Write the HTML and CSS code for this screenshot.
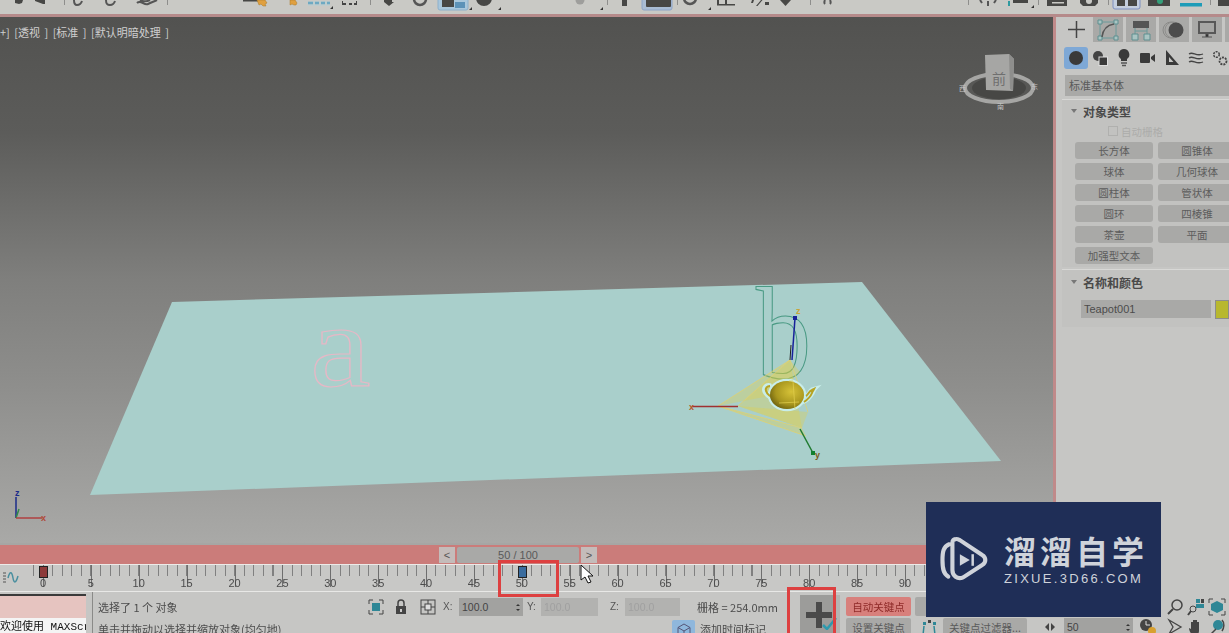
FILE: index.html
```html
<!DOCTYPE html>
<html lang="zh">
<head>
<meta charset="utf-8">
<title>3ds Max</title>
<link rel="stylesheet" href="styles.css">
</head>
<body>
<div class="app">
  <header class="toolbar">
    <svg class="toolbar-icons" width="1229" height="14" viewBox="0 0 1229 14">
      <g fill="#8e8e8c">
        <rect x="64" y="0" width="1" height="5"/>
        <rect x="167" y="0" width="1" height="5"/>
        <rect x="370" y="0" width="1" height="5"/>
        <rect x="607" y="0" width="1" height="5"/>
        <rect x="677" y="0" width="1" height="5"/>
        <rect x="810" y="0" width="1" height="5"/>
        <rect x="968" y="0" width="1" height="5"/>
        <rect x="1038" y="0" width="1" height="5"/>
        <rect x="1108" y="0" width="1" height="5"/>
        <rect x="1210" y="0" width="1" height="5"/>
      </g>
      <!-- highlighted tools -->
      <rect x="438" y="-3" width="30" height="13" rx="2" fill="#a9c7dc" stroke="#8cb0cc"/>
      <rect x="642" y="-3" width="30" height="13" rx="2" fill="#a9bcd4" stroke="#8ca4c8"/>
      <rect x="1113" y="-3" width="27" height="12" rx="2" fill="#c4cede" stroke="#7d8fc0"/>
      <g fill="#474745">
        <path d="M15 0h8l-1 3-3 1-4-1zM35 0h10v4l-2 0-8-3z"/>
        <rect x="243" y="0" width="15" height="1.500"/>
        <path d="M384 0h8v2h2l-5 4-5-4h0z"/>
        <path d="M442 0h12v7h-12z"/>
        <circle cx="484" cy="-2" r="8"/>
        <path d="M622 0h5v6h-5z"/>
        <rect x="646" y="-2" width="25" height="9" rx="1"/>
        <path d="M717 0h2v4h16v1.500h-18zM725 0h2v4h-2z"/>
        <path d="M752 0h2l-1 3h-2zM761 0l-5 6h1.500l5-6zM765 2h4v3h-4z"/>
        <path d="M780 0h11l-5.500 6z"/>
        <path d="M1013 0h15v3h-15z"/>
        <path d="M1047 0h20v6h-20z"/>
        <path d="M1080 0h18v3l-3 3h-12l-3-3z"/>
        <path d="M1117 0h8v6h-8zM1128 0h9v6h-9z"/>
        <path d="M1148 0h22v6h-22z"/>
        <path d="M1218 0h11v6h-11z"/>
      </g>
      <rect x="1052" y="2" width="12" height="1.500" fill="#c9c9c5"/>
      <circle cx="1089" cy="1" r="3" fill="#c9c9c5"/>
      <g fill="none" stroke="#555" stroke-width="2">
        <path d="M74 0c0 4 1 5 3 5s4-1 5-4M106 0c0 4 1 5 4 5s4-1 5-4"/>
        <path d="M137 3c4-4 7 3 11 1s5-2 9-4M140 0c4 2 8 1 10 0"/>
        <circle cx="420" cy="-1" r="6" stroke-width="2.500"/>
        <circle cx="690" cy="-2" r="6" stroke-width="2.500"/>
        <path d="M825 0c-1 2-1 3 0 4M830 0c1 2 1 3 0 4"/>
        <path d="M980 0l2 3M996 0l-2 3"/>
      </g>
      <rect x="987" y="1" width="2" height="5" fill="#555"/>
      <rect x="1008" y="1" width="2" height="5" fill="#2f9aa0"/>
      <circle cx="1160" cy="1" r="3" fill="#35a07a"/>
      <g fill="#e0a040" stroke="#a87a28" stroke-width=".5">
        <path d="M257 0h8l2 3-2 1 1 2-3 0-2-2-2 1z"/>
        <path d="M290 0h5l2 3-1 2-2 0-2-1-2 1z"/>
      </g>
      <path d="M308 3h5M315 3h4M321 3h4M327 3h3" stroke="#4d94b4" stroke-width="2.500"/>
      <path d="M308 1h22v5h-22z" fill="#a8d2de" opacity=".35"/>
      <path d="M342 4h4M349 4h3M354 4h3M342 2h1M356 2h1" stroke="#444" stroke-width="2"/>
      <rect x="455" y="2" width="10" height="6" fill="#5c92b8"/>
      <circle cx="580" cy="0" r="4.500" fill="#9e9e9c"/>
      <rect x="1180" y="3" width="22" height="3.500" fill="#1d9cb8"/>
      <g fill="#333">
        <path d="M333 6v3h-3zM472 7v3h-3zM501 7v3h-3zM603 7v3h-3zM711 7v3h-3zM1034 5v3h-3z"/>
      </g>
    </svg>
  </header>

  <div class="work">
    <div class="stage">
      <main class="viewport">
        <div class="vp-label">+] [透视 ] [标准 ] [默认明暗处理 ]</div>
        <svg class="scene" width="1053" height="526" viewBox="0 17 1053 526">
          <polygon points="172,302 862,282 1001,461 90,495" fill="#a9cfcb"/>
          <text class="glyph-a" transform="translate(310 386) scale(1.12 .98)">a</text>
          <text class="glyph-b" transform="translate(756 378) scale(.84 1)">b</text>
          <!-- view cube -->
          <ellipse cx="999" cy="88" rx="34" ry="14" fill="none" stroke="#a6a6a4" stroke-width="4"/>
          <ellipse cx="999" cy="88" rx="27" ry="11" fill="#474745"/>
          <path d="M985 55l24-1 5 5-1 32-27-1z" fill="#a6a6a4"/>
          <path d="M1009 54l5 5-1 32-3-2z" fill="#8e8e8c"/>
          <text class="cube-t" x="992" y="84">前</text>
          <text class="cube-d" x="959" y="91">西</text>
          <text class="cube-d" x="1031" y="89">东</text>
          <text class="cube-d" x="997" y="109">南</text>
          <!-- light cone -->
          <g fill="#e8cf3a" fill-opacity=".3">
            <polygon points="718,406 790,360 800,372 775,395"/>
            <polygon points="738,406 790,360 802,428"/>
            <polygon points="718,406 802,428 806,436"/>
            <polygon points="738,406 808,412 802,428"/>
          </g>
          <g stroke="#e2d26e" stroke-width="1" fill="none" opacity=".75">
            <path d="M718 406L790 360M718 406L802 428M718 406L806 436M738 406L790 360M790 360L808 412"/>
          </g>
          <!-- teapot -->
          <path d="M770 385c-4-1-7 2-6 6 1 4 6 7 11 9M806 396c2-1 3-5 6-7l4-1c-2 2-2 3-3 5-3 5-5 7-9 9" fill="none" stroke="#c8edea" stroke-width="3.500" stroke-linecap="round"/>
          <ellipse cx="787" cy="395" rx="18" ry="15" fill="none" stroke="#c8edea" stroke-width="2.500"/>
          <path d="M770 386c-3 0-5 2-4 5 1 3 5 6 9 8M806 396c2-1 3-5 6-6l2-1c-1 2-2 3-2 4-2 5-5 7-8 9" fill="none" stroke="#b7a323" stroke-width="2"/>
          <defs>
            <radialGradient id="pot" cx=".62" cy=".38" r=".75">
              <stop offset="0" stop-color="#d6c238"/>
              <stop offset=".6" stop-color="#a8961e"/>
              <stop offset="1" stop-color="#5e540c"/>
            </radialGradient>
          </defs>
          <ellipse cx="787" cy="395" rx="17" ry="14" fill="url(#pot)"/>
          <path d="M789 381l4 0 2 28M779 403l20-1" stroke="#e2d050" stroke-width="1" fill="none" opacity=".7"/>
          <!-- axes -->
          <path d="M692 406.500h46" stroke="#a03030" stroke-width="1.500"/>
          <path d="M795 318l-3 42" stroke="#16209a" stroke-width="1.500"/>
          <path d="M791 345l-1 15" stroke="#222" stroke-width="1"/>
          <path d="M800 429l13 24" stroke="#1f7a30" stroke-width="1.500"/>
          <rect x="793" y="316" width="4" height="4" fill="#16209a"/>
          <rect x="811" y="451" width="4" height="4" fill="#128030"/>
          <text class="axis" x="796" y="314" fill="#c9a43a">z</text>
          <text class="axis" x="689" y="410" fill="#b5562a">x</text>
          <text class="axis" x="815" y="458" fill="#7a5a20">y</text>
          <!-- world axes -->
          <path d="M16 518V497" stroke="#1a2b8a" stroke-width="1.500"/>
          <path d="M16 518l3-9" stroke="#2f8a4a" stroke-width="1.500"/>
          <path d="M16 518H42" stroke="#b04040" stroke-width="1.500"/>
          <text class="axis" x="15" y="496" fill="#1a2b8a">z</text>
          <text class="axis" x="41" y="521" fill="#b04a3a">x</text>
        </svg>
      </main>

      <div class="slider">
        <div class="sl-btn">&lt;</div>
        <div class="sl-mid">50 / 100</div>
        <div class="sl-btn">&gt;</div>
      </div>

      <div class="ruler">
        <svg class="curve" width="18" height="14" viewBox="0 0 18 14"><path d="M1 3h3M1 6h3M1 9h3M1 12h3" stroke="#555"/><path d="M6 8c2-8 4-6 5 0s3 5 5-2" fill="none" stroke="#4a8f9f" stroke-width="1.500"/></svg>
        <div class="labels">
          <span>0</span><span>5</span><span>10</span><span>15</span><span>20</span><span>25</span><span>30</span><span>35</span><span>40</span><span>45</span><span>50</span><span>55</span><span>60</span><span>65</span><span>70</span><span>75</span><span>80</span><span>85</span><span>90</span>
        </div>
        <div class="key key-start"></div>
        <div class="key key-now"></div>
      </div>
    </div>

    <aside class="panel">
      <div class="tabs">
        <svg class="tab-plus" width="17" height="17" viewBox="0 0 17 17"><path d="M8.500 0v17M0 8.500h17" stroke="#444" stroke-width="1.500"/></svg>
        <div class="tab"><svg width="24" height="22" viewBox="0 0 24 22"><path d="M4 3h16v16H4z" fill="none" stroke="#6a9a9a"/><path d="M2 1h4v4H2zM18 1h4v4h-4zM2 17h4v4H2zM18 17h4v4h-4z" fill="#a9c4c2" stroke="#5f8f90"/><path d="M6 18C7 10 11 6 18 5" fill="none" stroke="#555" stroke-width="1.500"/></svg></div>
        <div class="tab"><svg width="24" height="22" viewBox="0 0 24 22"><path d="M4 2h16v7H4z" fill="#555"/><path d="M6 9v6M18 9v6M6 12h12" fill="none" stroke="#6a9a9a"/><path d="M3 15h6v6H3zM15 15h6v6h-6z" fill="#a9c4c2" stroke="#5f8f90"/></svg></div>
        <div class="tab"><svg width="24" height="20" viewBox="0 0 24 20"><circle cx="9" cy="10" r="8" fill="none" stroke="#8a8a88"/><circle cx="11" cy="10" r="8" fill="none" stroke="#8f8f8d"/><circle cx="14" cy="10" r="7.500" fill="#4c4c4c"/></svg></div>
        <div class="tab"><svg width="24" height="20" viewBox="0 0 24 20"><rect x="3" y="1" width="18" height="13" fill="#585858"/><rect x="5" y="3" width="14" height="9" fill="#a6a6a4"/><path d="M11 14h2v3h-2zM7 17h10" stroke="#555" stroke-width="1.200"/></svg></div>
        <div class="tab tab-end"></div>
      </div>
      <div class="cats">
        <div class="cat cat-on"><svg width="16" height="16" viewBox="0 0 16 16"><circle cx="8" cy="8" r="7" fill="#3a3a3a"/></svg></div>
        <div class="cat"><svg width="16" height="16" viewBox="0 0 16 16"><circle cx="6" cy="6" r="5" fill="#444"/><rect x="7" y="7" width="8.500" height="8.500" fill="#3a3a3a" stroke="#ddd"/></svg></div>
        <div class="cat"><svg width="16" height="18" viewBox="0 0 16 18"><path d="M8 0a5.500 5.500 0 0 1 3 10v2H5v-2A5.500 5.500 0 0 1 8 0z" fill="#3a3a3a"/><path d="M5 14h6M6 16.500h4" stroke="#555" stroke-width="1.300"/></svg></div>
        <div class="cat"><svg width="16" height="16" viewBox="0 0 16 16"><rect x="0" y="3" width="10" height="10" rx="1" fill="#3a3a3a"/><path d="M11 7l4-3v8l-4-3z" fill="#3a3a3a"/></svg></div>
        <div class="cat"><svg width="16" height="16" viewBox="0 0 16 16"><path d="M2 0l13 15H2zM5 7v5h4.500z" fill="#3a3a3a" fill-rule="evenodd"/></svg></div>
        <div class="cat"><svg width="16" height="16" viewBox="0 0 16 16"><path d="M1 4c4-3 7 3 14 0M1 8c4-3 7 3 14 0M1 12c4-3 7 3 14 0" fill="none" stroke="#444" stroke-width="1.300"/></svg></div>
        <div class="cat"><svg width="16" height="16" viewBox="0 0 16 16"><circle cx="4.500" cy="4.500" r="2.800" fill="none" stroke="#444" stroke-width="1.500" stroke-dasharray="2 1"/><circle cx="11" cy="11" r="3.500" fill="none" stroke="#444" stroke-width="1.800" stroke-dasharray="2 1"/></svg></div>
      </div>
      <div class="dropdown">标准基本体</div>

      <section class="rollout">
        <h2 class="roll-title"><span class="tri"></span>对象类型</h2>
        <label class="autogrid"><span class="check"></span>自动栅格</label>
        <div class="btn-grid">
          <div class="pbtn">长方体</div><div class="pbtn">圆锥体</div>
          <div class="pbtn">球体</div><div class="pbtn">几何球体</div>
          <div class="pbtn">圆柱体</div><div class="pbtn">管状体</div>
          <div class="pbtn">圆环</div><div class="pbtn">四棱锥</div>
          <div class="pbtn">茶壶</div><div class="pbtn">平面</div>
          <div class="pbtn">加强型文本</div>
        </div>
      </section>

      <section class="rollout rollout-name">
        <h2 class="roll-title"><span class="tri"></span>名称和颜色</h2>
        <div class="name-row">
          <div class="name-input">Teapot001</div>
          <div class="swatch"></div>
        </div>
      </section>
    </aside>
  </div>

  <footer class="status">
    <div class="script">
      <div class="script-in"></div>
      <div class="script-out">欢迎使用 MAXScr</div>
    </div>
    <div class="status-main">
      <div class="row">
        <span class="msg">选择了 1 个 对象</span>
        <svg class="i-sel" width="16" height="16" viewBox="0 0 16 16"><path d="M1 5V1h4M11 1h4v4M15 11v4h-4M5 15H1v-4" fill="none" stroke="#444"/><rect x="4" y="4" width="8" height="8" fill="#2f8796"/></svg>
        <svg class="i-lock" width="12" height="16" viewBox="0 0 12 16"><path d="M3 7V4a3 3 0 0 1 6 0v3" fill="none" stroke="#444" stroke-width="1.500"/><rect x="1" y="7" width="10" height="8" fill="#444"/><rect x="5" y="10" width="2" height="3" fill="#ccc"/></svg>
        <svg class="i-abs" width="16" height="16" viewBox="0 0 16 16"><rect x="1" y="1" width="14" height="14" fill="none" stroke="#444"/><path d="M8 1v14M1 8h14" stroke="#444"/><rect x="5" y="5" width="6" height="6" fill="#ddd" stroke="#444"/></svg>
        <span class="axl axl-x">X:</span><span class="inp inp-x">100.0<i class="spin"></i></span>
        <span class="axl axl-y">Y:</span><span class="inp inp-y off">100.0</span>
        <span class="axl axl-z">Z:</span><span class="inp inp-z off">100.0</span>
        <span class="grid-txt">栅格 = 254.0mm</span>
      </div>
      <div class="row row2">
        <span class="msg msg2">单击并拖动以选择并缩放对象(均匀地)</span>
        <span class="tag-ic"><svg width="18" height="18" viewBox="0 0 18 18"><path d="M9 2l6 3.500v7L9 16l-6-3.500v-7z" fill="none" stroke="#557"/><path d="M3 5.500L9 9l6-3.500M9 9v7" fill="none" stroke="#557"/></svg></span>
        <span class="tag-txt">添加时间标记</span>
      </div>
    </div>
    <div class="bigbtn">
      <svg width="31" height="30" viewBox="0 0 31 30"><path d="M10 2h6v10h10v6H16v10h-6V18H0v-6h10z" fill="#4a4a4a"/><path d="M17 25l4 4 9-11" fill="none" stroke="#2f9aae" stroke-width="2.500"/></svg>
    </div>
    <div class="status-right">
      <div class="row">
        <span class="key-btn key-auto">自动关键点</span>
        <span class="key-btn key-sel">选</span>
        <svg class="nav n1" width="18" height="18" viewBox="0 0 18 18"><circle cx="11" cy="7" r="5" fill="none" stroke="#444" stroke-width="1.500"/><path d="M7 11l-5 5" stroke="#444" stroke-width="2"/></svg>
        <svg class="nav n2" width="18" height="18" viewBox="0 0 18 18"><rect x="9" y="1" width="4" height="4" fill="#2f8796"/><rect x="14" y="1" width="3" height="4" fill="#444"/><rect x="9" y="6" width="8" height="4" fill="#2f8796"/><circle cx="6" cy="11" r="3" fill="none" stroke="#444"/><path d="M4 13l-3 4" stroke="#444" stroke-width="2"/></svg>
        <svg class="nav n3" width="18" height="18" viewBox="0 0 18 18"><path d="M1 5V1h4M13 1h4v4M17 13v4h-4M5 17H1v-4" fill="none" stroke="#444"/><path d="M9 3l6 3v6l-6 3-6-3V6z" fill="#2f8796"/></svg>
      </div>
      <div class="row row2">
        <span class="key-btn key-set">设置关键点</span>
        <svg class="ic-filter" width="16" height="16" viewBox="0 0 16 16"><rect x="2" y="3" width="3" height="3" fill="#2f8796"/><rect x="7" y="1" width="3" height="3" fill="#444"/><rect x="12" y="3" width="3" height="3" fill="#2f8796"/><path d="M3 7l-1 9M13 7l1 9" stroke="#2f8796" stroke-width="1.500"/></svg>
        <span class="key-btn key-filter">关键点过滤器...</span>
        <span class="arrows"><i class="al"></i><i class="ar"></i></span>
        <span class="inp inp-frame">50<i class="spin"></i></span>
        <svg class="nav n0" width="18" height="18" viewBox="0 0 18 18"><circle cx="7" cy="7" r="6" fill="#444"/><path d="M7 3v4h4" stroke="#ddd" fill="none"/><circle cx="13" cy="13" r="4" fill="#d8a030"/></svg>
        <svg class="nav n4" width="18" height="18" viewBox="0 0 18 18"><path d="M3 2l12 7-12 7 4-7z" fill="none" stroke="#444" stroke-width="1.300"/></svg>
        <svg class="nav n5" width="18" height="18" viewBox="0 0 18 18"><path d="M5 17c-2-3-3-5-3-7l2 1V4h2v5V2h2v7V2h2v7V4h2v9c0 2-1 3-2 4z" fill="#444"/></svg>
        <svg class="nav n6" width="18" height="18" viewBox="0 0 18 18"><circle cx="10" cy="7" r="5" fill="#2f8796"/><path d="M3 16l5-5M14 2c3 3 2 8 0 11" fill="none" stroke="#444" stroke-width="1.500"/></svg>
      </div>
    </div>
  </footer>

  <div class="mark mark-frame"></div>
  <div class="mark mark-add"></div>
  <svg class="cursor" width="14" height="20" viewBox="0 0 14 20"><path d="M1 1v15l4-3 3 6 3-1-3-6h5z" fill="#fff" stroke="#111"/></svg>

  <aside class="watermark">
    <svg class="wm-logo" width="48" height="50" viewBox="0 0 58 60">
      <path d="M11 11C4 14 3 20 3 30s1 17 7 20M18 5c-1 0-3 1-3 4v33c0 7 6 12 13 9l23-15c5-3 5-9 0-12L24 6c-2-1-4-2-6-1z" fill="none" stroke="#cfd3da" stroke-width="5" stroke-linejoin="round" stroke-linecap="round"/>
      <path d="M24 23l12 7-12 7z" fill="#cfd3da"/>
      <rect x="38" y="23" width="3" height="14" fill="#cfd3da"/>
    </svg>
    <div class="wm-text">
      <div class="wm-cn">溜溜自学</div>
      <div class="wm-en">ZIXUE.3D66.COM</div>
    </div>
  </aside>
</div>
</body>
</html>
```

FILE: styles.css
```css
* { box-sizing: border-box; }
html, body { margin: 0; padding: 0; }
body {
  width: 1229px;
  height: 633px;
  overflow: hidden;
  font-family: "Noto Sans CJK SC", "Liberation Sans", sans-serif;
  font-size: 10px;
  color: #4a4a4a;
  background: #c6c6c4;
}
.app {
  position: relative;
  width: 1229px;
  height: 633px;
  display: flex;
  flex-direction: column;
  overflow: hidden;
  filter: blur(.35px);
}

/* top toolbar */
.toolbar {
  height: 17px;
  flex: none;
  background: #c9c9c5;
  border-bottom: 3px solid #b58a8a;
}
.toolbar-icons { display: block; }

/* viewport, time line and command panel */
.work { height: 575px; flex: none; display: flex; }
.stage { width: 1056px; flex: none; display: flex; flex-direction: column; }
.viewport {
  position: relative;
  height: 526px;
  flex: none;
  border-right: 3px solid #c08a8a;
  background: linear-gradient(#525250 0, #5c5c5a 22%, #7f7f7d 50%, #8e8e8c 70%, #a9a9a7 100%);
  overflow: hidden;
}
.vp-label {
  position: absolute;
  left: 0;
  top: 7px;
  font-size: 11px;
  word-spacing: 2px;
  line-height: 16px;
  color: #cfcfcf;
  white-space: nowrap;
}
.scene { position: absolute; left: 0; top: 0; }
.scene text { font-family: "Liberation Serif", serif; }
.glyph-a, .glyph-b { fill: none; stroke-width: 1.200; }
.glyph-a { font-size: 122px; stroke: #e6b8c6; }
.glyph-b { font-size: 131px; stroke: #4a9a84; }
.scene .cube-t { font-family: "Noto Sans CJK SC", sans-serif; font-size: 14px; fill: #6f6f6f; }
.scene .cube-d { font-family: "Noto Sans CJK SC", sans-serif; font-size: 7px; fill: #c4c4c4; }
.scene .axis { font-family: "Liberation Sans", sans-serif; font-size: 9px; font-weight: 700; }

/* panel */
.panel { flex: 1; min-width: 0; background: #c6c6c4; overflow: hidden; }
.tabs { height: 25px; display: flex; align-items: stretch; gap: 4px; padding-left: 12px; margin-bottom: 5px; white-space: nowrap; }
.tab-plus { flex: none; align-self: center; margin-right: 4px; }
.tab { flex: none; width: 30px; background: #a9a9a7; display: flex; align-items: center; justify-content: center; }
.tab + .tab { margin-left: -1px; }
.tab-end { width: 20px; }
.cats { height: 22px; display: flex; padding-left: 8px; margin-bottom: 6px; }
.cat { flex: none; width: 24px; display: flex; align-items: center; justify-content: center; }
.cat-on { background: #7ea8d6; border-radius: 3px; }
.dropdown {
  height: 21px;
  margin-left: 9px;
  padding-left: 4px;
  background: #a9a9a7;
  font-size: 11px;
  line-height: 21px;
  color: #5a5a5a;
}
.rollout {
  margin: 3px 0 0 6px;
  padding-bottom: 3px;
  background: #c2c2c0;
  border-top: 1px solid #d8d8d6;
}
.roll-title {
  display: flex;
  align-items: center;
  height: 22px;
  margin: 0;
  padding-left: 9px;
  font-size: 12px;
  font-weight: 700;
  color: #4a4a4a;
}
.tri {
  width: 0;
  height: 0;
  margin-right: 6px;
  border-left: 3px solid transparent;
  border-right: 3px solid transparent;
  border-top: 4px solid #777;
}
.autogrid {
  display: flex;
  align-items: center;
  gap: 3px;
  height: 16px;
  margin: 1px 0 3px 46px;
  font-size: 10.500px;
  color: #acacaa;
}
.check { width: 10px; height: 10px; border: 1px solid #b0b0ae; }
.btn-grid {
  display: grid;
  grid-template-columns: 78px 78px;
  grid-auto-rows: 17px;
  gap: 4px 5px;
  margin-left: 13px;
}
.pbtn {
  background: #a9a9a7;
  border-radius: 3px;
  text-align: center;
  font-size: 10.500px;
  line-height: 17px;
  color: #5c5c5c;
  white-space: nowrap;
}
.rollout-name { margin-top: 2px; padding-bottom: 8px; }
.rollout-name .roll-title { height: 24px; }
.name-row { display: flex; gap: 4px; margin: 6px 0 0 19px; }
.name-input {
  flex: none;
  width: 130px;
  height: 18px;
  padding-left: 3px;
  background: #a9a9a7;
  font-family: "Liberation Sans", sans-serif;
  font-size: 11px;
  line-height: 18px;
  color: #4c4c4c;
}
.swatch { flex: 1; height: 19px; background: #b8b82e; border: 1px solid #8d8d8b; }

/* time slider */
.slider {
  height: 22px;
  flex: none;
  display: flex;
  gap: 2px;
  padding: 2px 0 1px 439px;
  background: #cb7c7a;
  border-top: 2px solid #a6a6a4;
  border-bottom: 1px solid #eceae8;
}
.sl-btn {
  width: 16px;
  background: #c4bcba;
  text-align: center;
  font-family: "Liberation Sans", sans-serif;
  font-size: 11px;
  line-height: 16px;
  color: #555;
}
.sl-mid {
  width: 122px;
  background: #a9a9a7;
  border-radius: 2px;
  text-align: center;
  font-family: "Liberation Sans", sans-serif;
  font-size: 11px;
  line-height: 17px;
  color: #5a5a5a;
}

/* ruler */
.ruler {
  position: relative;
  height: 27px;
  flex: none;
  background:
    repeating-linear-gradient(90deg, #6e6e6e 0 1px, transparent 1px 47.900px) 42.500px 0 / 100% 22px no-repeat,
    repeating-linear-gradient(90deg, #808080 0 1px, transparent 1px 9.580px) 32.900px 0 / 100% 11px no-repeat,
    #c8c8c6;
  border-bottom: 1px solid #e8e8e6;
  overflow: hidden;
}
.curve { position: absolute; left: 2px; top: 5px; }
.labels { display: flex; padding: 11px 0 0 19px; }
.labels span {
  flex: none;
  width: 47.900px;
  text-align: center;
  font-family: "Liberation Sans", sans-serif;
  font-size: 11px;
  line-height: 14px;
  color: #4c4c4c;
}
.key { position: absolute; top: 1px; width: 9px; height: 12px; border: 1px solid #222; }
.key-start { left: 39px; background: #8d3a3a; }
.key-now { left: 518px; background: #3a6c9e; }

/* status */
.status { flex: 1; min-height: 0; display: flex; overflow: hidden; }
.script { flex: none; width: 88px; }
.script-in {
  height: 24px;
  margin-top: 2px;
  background: #e6c4c0;
  border-top: 2px solid #3a3a3a;
  width: 86px;
}
.script-out {
  width: 86px;
  height: 15px;
  overflow: hidden;
  background: #f4f4f4;
  font-family: "Liberation Mono", "Noto Sans CJK SC", monospace;
  font-size: 11px;
  line-height: 18px;
  color: #111;
  white-space: nowrap;
}
.status-main {
  flex: none;
  width: 700px;
  padding-left: 5px;
  margin-left: 4px;
  border-left: 1px solid #8a8a88;
}
.row { display: flex; align-items: center; height: 21px; margin-top: 4px; white-space: nowrap; }
.row2 { margin-top: 1px; height: 18px; align-items: flex-start; }
.msg { flex: none; width: 270px; font-size: 11px; color: #4c4c4c; }
.msg2 { width: 574px; line-height: 22px; }
.i-lock { flex: none; margin-left: 11px; }
.i-abs { flex: none; margin-left: 13px; }
.i-sel { flex: none; }
.axl { flex: none; font-family: "Liberation Sans", sans-serif; font-size: 10px; color: #555; }
.axl-x { margin-left: 7px; width: 16px; }
.axl-y { margin-left: 4px; width: 14px; }
.axl-z { margin-left: 12px; width: 15px; }
.inp {
  position: relative;
  flex: none;
  height: 18px;
  padding-left: 3px;
  background: #a2a2a0;
  font-family: "Liberation Sans", sans-serif;
  font-size: 10.500px;
  line-height: 18px;
  color: #444;
}
.inp-x { width: 64px; }
.inp-y { width: 57px; }
.inp-z { width: 55px; }
.off { background: #b2b2b0; color: #a0a0a0; }
.spin { position: absolute; right: 3px; top: 4px; width: 0; height: 0; border: 2.500px solid transparent; border-bottom-color: #333; }
.spin::after { content: ""; position: absolute; left: -2.500px; top: 5px; border: 2.500px solid transparent; border-top-color: #333; }
.grid-txt { flex: none; margin-left: 17px; font-size: 11px; color: #4c4c4c; }
.tag-ic { flex: none; width: 23px; height: 21px; background: #8fb7dc; border-radius: 2px; display: flex; align-items: center; justify-content: center; margin-top: 2px; }
.tag-txt { flex: none; margin-left: 5px; font-size: 11px; line-height: 22px; }

.bigbtn {
  flex: none;
  width: 40px;
  height: 39px;
  margin: 3px 0 0 8px;
  background: linear-gradient(90deg, #9c9c9a 0 35px, #b4b4b2 35px);
  display: flex;
  align-items: center;
  padding-left: 6px;
}
.status-right { flex: 1; min-width: 0; padding-left: 6px; }
.key-btn {
  flex: none;
  height: 19px;
  border-radius: 2px;
  background: #a9a9a7;
  text-align: center;
  font-size: 10.500px;
  line-height: 19px;
  color: #5a5a5a;
}
.key-auto { width: 65px; background: #d8807c; color: #8e2a28; }
.key-sel { width: 40px; margin-left: 4px; }
.key-set { width: 65px; height: 22px; }
.ic-filter { flex: none; margin-left: 10px; margin-top: 1px; }
.key-filter { width: 84px; height: 22px; margin-left: 6px; }
.arrows { flex: none; display: flex; gap: 2px; margin: 5px 0 0 18px; }
.arrows i { width: 0; height: 0; border: 4px solid transparent; }
.al { border-right-color: #444 !important; border-left-width: 0 !important; }
.ar { border-left-color: #444 !important; border-right-width: 0 !important; }
.inp-frame { width: 69px; margin-left: 9px; height: 22px; }
.nav { flex: none; }
.n1 { margin-left: 211px; }
.n2, .n3 { margin-left: 3px; }
.n0 { margin-left: 6px; }
.n4 { margin-left: 9px; }
.n5 { margin-left: 3px; }
.n6 { margin-left: 3px; }

/* annotations */
.mark { position: absolute; border: 3px solid #dd4040; }
.mark-frame { left: 498px; top: 560px; width: 61px; height: 37px; }
.mark-add { left: 787px; top: 587px; width: 49px; height: 50px; }
.cursor { position: absolute; left: 580px; top: 564px; }

/* watermark */
.watermark {
  position: absolute;
  left: 926px;
  top: 502px;
  width: 235px;
  height: 115px;
  background: #1f2e57;
  display: flex;
  align-items: center;
  gap: 16px;
  padding-left: 14px;
}
.wm-logo { flex: none; }
.wm-text { flex: none; color: #cfd3da; }
.wm-cn { font-size: 32px; font-weight: 700; line-height: 36px; letter-spacing: 4px; white-space: nowrap; }
.wm-en { font-family: "Liberation Sans", sans-serif; font-size: 13px; line-height: 16px; margin-top: 3px; letter-spacing: 2.300px; white-space: nowrap; }
```
